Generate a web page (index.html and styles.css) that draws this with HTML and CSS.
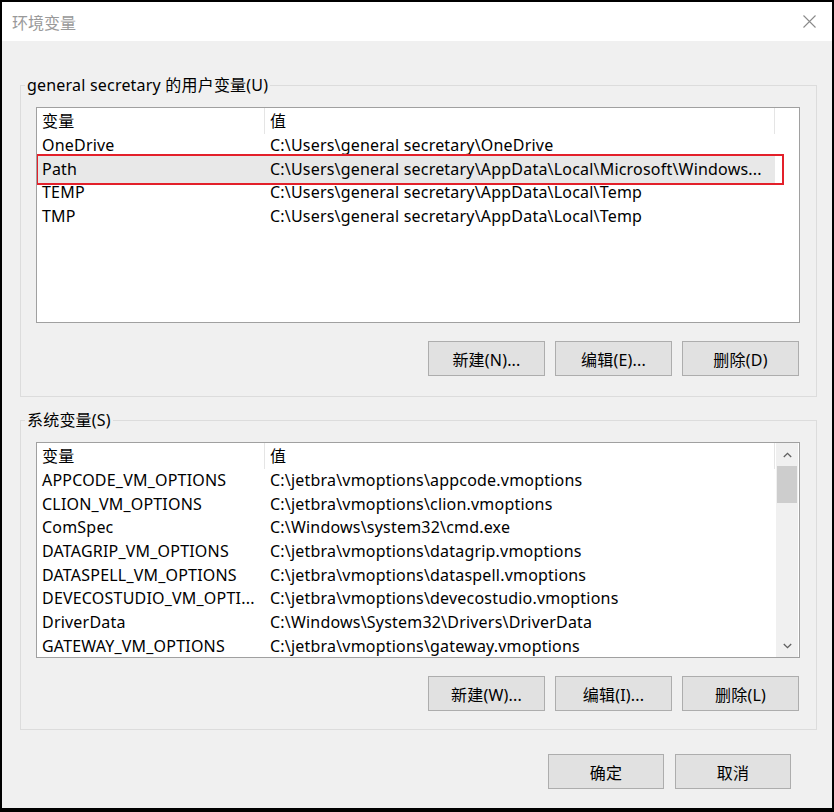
FILE: index.html
```html
<!DOCTYPE html>
<html lang="zh-CN">
<head>
<meta charset="utf-8">
<title>环境变量</title>
<link rel="stylesheet" href="styles.css">
</head>
<body>
<div class="window">
  <div class="titlebar">
    <span class="title">环境变量</span>
    <svg class="close" width="13" height="13" viewBox="0 0 13 13"><path d="M0.5 0.5 L12.5 12.5 M12.5 0.5 L0.5 12.5" stroke="#8a8a8a" stroke-width="1.1" fill="none"/></svg>
  </div>
  <div class="content">
    <fieldset class="group group-user">
      <legend>general secretary 的用户变量(U)</legend>
      <div class="list">
        <div class="list-body">
          <div class="row head"><div class="cell">变量</div><div class="cell">值</div></div>
          <div class="row"><div class="cell">OneDrive</div><div class="cell">C:\Users\general secretary\OneDrive</div></div>
          <div class="row selected"><div class="cell">Path</div><div class="cell">C:\Users\general secretary\AppData\Local\Microsoft\Windows...</div></div>
          <div class="row"><div class="cell">TEMP</div><div class="cell">C:\Users\general secretary\AppData\Local\Temp</div></div>
          <div class="row"><div class="cell">TMP</div><div class="cell">C:\Users\general secretary\AppData\Local\Temp</div></div>
        </div>
      </div>
      <div class="buttons">
        <button class="btn">新建(N)...</button>
        <button class="btn">编辑(E)...</button>
        <button class="btn">删除(D)</button>
      </div>
    </fieldset>
    <fieldset class="group group-system">
      <legend>系统变量(S)</legend>
      <div class="list">
        <div class="list-body">
          <div class="row head"><div class="cell">变量</div><div class="cell">值</div></div>
          <div class="row"><div class="cell">APPCODE_VM_OPTIONS</div><div class="cell">C:\jetbra\vmoptions\appcode.vmoptions</div></div>
          <div class="row"><div class="cell">CLION_VM_OPTIONS</div><div class="cell">C:\jetbra\vmoptions\clion.vmoptions</div></div>
          <div class="row"><div class="cell">ComSpec</div><div class="cell">C:\Windows\system32\cmd.exe</div></div>
          <div class="row"><div class="cell">DATAGRIP_VM_OPTIONS</div><div class="cell">C:\jetbra\vmoptions\datagrip.vmoptions</div></div>
          <div class="row"><div class="cell">DATASPELL_VM_OPTIONS</div><div class="cell">C:\jetbra\vmoptions\dataspell.vmoptions</div></div>
          <div class="row"><div class="cell">DEVECOSTUDIO_VM_OPTI...</div><div class="cell">C:\jetbra\vmoptions\devecostudio.vmoptions</div></div>
          <div class="row"><div class="cell">DriverData</div><div class="cell">C:\Windows\System32\Drivers\DriverData</div></div>
          <div class="row"><div class="cell">GATEWAY_VM_OPTIONS</div><div class="cell">C:\jetbra\vmoptions\gateway.vmoptions</div></div>
        </div>
        <div class="scrollbar">
          <div class="sb-arrow"><svg width="9" height="6" viewBox="0 0 9 6"><path d="M0.8 5 L4.5 1.3 L8.2 5" stroke="#606060" stroke-width="1.3" fill="none"/></svg></div>
          <div class="sb-thumb"></div>
          <div class="sb-track"></div>
          <div class="sb-arrow"><svg width="9" height="6" viewBox="0 0 9 6"><path d="M0.8 1 L4.5 4.7 L8.2 1" stroke="#606060" stroke-width="1.3" fill="none"/></svg></div>
        </div>
      </div>
      <div class="buttons">
        <button class="btn">新建(W)...</button>
        <button class="btn">编辑(I)...</button>
        <button class="btn">删除(L)</button>
      </div>
    </fieldset>
    <div class="dialog-buttons">
      <button class="btn btn-dialog">确定</button>
      <button class="btn btn-dialog">取消</button>
    </div>
  </div>
</div>
</body>
</html>
```

FILE: styles.css
```css
html, body {
  margin: 0;
  padding: 0;
}
body {
  background: #000;
  width: 834px;
  height: 812px;
  overflow: hidden;
  font-family: "Noto Sans", "Noto Sans CJK SC", sans-serif;
  font-size: 16px;
  letter-spacing: 0.2px;
  color: #000;
}
.window {
  margin: 2px 2px 0 2px;
  width: 830px;
  height: 806px;
  background: #f0f0f0;
  display: flex;
  flex-direction: column;
}
.titlebar {
  height: 39px;
  flex: none;
  background: #fff;
  display: flex;
  align-items: center;
  justify-content: space-between;
  padding: 0 16px 0 10px;
}
.title {
  font-family: "Noto Sans CJK SC", sans-serif;
  font-size: 16px;
  letter-spacing: 0;
  color: #999;
}
.close {
  display: block;
}
.content {
  padding: 34px 15px 0 18px;
}
.group {
  margin: 0;
  padding: 12px 16px 20px 15px;
  border: 1px solid #dcdcdc;
  min-width: 0;
}
.group-system {
  margin-top: 13px;
  padding-bottom: 18px;
}
.group legend {
  padding: 0 2px;
  margin-left: -11px;
  line-height: 20px;
}
.list {
  height: 216px;
  box-sizing: border-box;
  border: 1px solid #a0a0a0;
  background: #fff;
  display: flex;
  overflow: hidden;
}
.list-body {
  width: 738px;
  flex: none;
}
.row {
  display: grid;
  grid-template-columns: 228px 510px;
  height: 23.7px;
  line-height: 23.7px;
}
.row.head {
  height: 26px;
  line-height: 27px;
}
.cell {
  padding-left: 5px;
  white-space: nowrap;
  overflow: hidden;
  text-overflow: ellipsis;
}
.row.head .cell {
  border-right: 1px solid #e5e5e5;
}
.row.selected {
  position: relative;
  z-index: 0;
}
.row.selected::before {
  content: "";
  position: absolute;
  left: 0;
  right: 0;
  top: -2px;
  bottom: -2px;
  background: #e8e8e8;
  z-index: -1;
}
.row.selected::after {
  content: "";
  position: absolute;
  left: -1px;
  right: -9px;
  top: -4px;
  bottom: -4px;
  border: 2px solid #e3202a;
}
.scrollbar {
  width: 22px;
  margin-left: auto;
  margin-right: 1px;
  background: #f0f0f0;
  display: flex;
  flex-direction: column;
}
.sb-arrow {
  height: 23px;
  flex: none;
  display: flex;
  align-items: center;
  justify-content: center;
}
.sb-thumb {
  height: 37px;
  flex: none;
  margin: 0 1px;
  background: #cdcdcd;
}
.sb-track {
  flex: 1;
}
.buttons {
  display: flex;
  justify-content: flex-end;
  gap: 10px;
  margin-top: 18px;
  margin-right: 1px;
}
.btn {
  width: 117px;
  height: 35px;
  box-sizing: border-box;
  border: 1px solid #adadad;
  background: #e1e1e1;
  font: inherit;
  letter-spacing: inherit;
  color: #000;
  padding: 0;
}
.dialog-buttons {
  display: flex;
  justify-content: flex-end;
  gap: 11px;
  margin-top: 24px;
  margin-right: 26px;
}
.btn-dialog {
  width: 116px;
}
```
